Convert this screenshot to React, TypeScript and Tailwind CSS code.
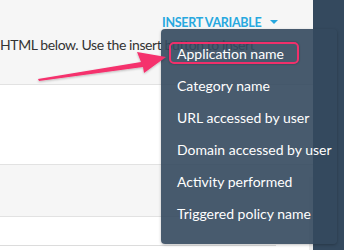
const items = [
  "Application name",
  "Category name",
  "URL accessed by user",
  "Domain accessed by user",
  "Activity performed",
  "Triggered policy name",
];

function Arrow() {
  return (
    <svg
      className="pointer-events-none absolute left-0 top-0"
      width="344"
      height="250"
      viewBox="0 0 344 250"
    >
      <defs>
        <filter id="sh" x="-10%" y="-30%" width="120%" height="160%">
          <feDropShadow dx="0" dy="1" stdDeviation="1" floodColor="#000" floodOpacity="0.25" />
        </filter>
      </defs>
      <polygon
        points="38,79 141,62 137,52 166,57 144,73 143,67 39,81"
        fill="#f5306d"
        filter="url(#sh)"
      />
    </svg>
  );
}

export default function App() {
  return (
    <div
      className="relative flex h-[250px] w-[344px] overflow-hidden bg-white text-[#333]"
      style={{ fontFamily: "Lato, 'Open Sans', Arial, sans-serif" }}
    >
      <div className="relative flex w-[313px] flex-col">
        <div className="h-[85px] border-b border-[#e2e2e2] bg-[#f6f6f6]">
          <div className="flex h-[36px] items-start pl-[162px] pt-[16px]">
            <span className="text-[12.5px] font-bold uppercase leading-[13px] tracking-[-0.3px] text-[#27a8df]">
              Insert Variable
            </span>
            <svg className="ml-[9px] mt-[4px]" width="8" height="4" viewBox="0 0 8 4">
              <polygon points="0,0 8,0 4,4" fill="#27a8df" />
            </svg>
          </div>
          <div className="whitespace-nowrap text-[14px] leading-[18px] tracking-[-0.4px]">
            HTML below. Use the insert button to insert
          </div>
        </div>
        <div className="h-[80px] border-b border-[#e2e2e2] bg-white" />
        <div className="h-[52px] border-b border-[#e2e2e2] bg-[#f6f6f6]" />
        <div className="h-[29px] w-[276px] border-b border-[#dcdcdc] bg-white" />
        <div className="absolute right-0 top-[177px] h-[73px] w-[4px] bg-[#ececec]" />
      </div>
      <div className="w-[31px] bg-[#34495e]" />

      <div className="absolute left-[161px] top-[29px] w-[176px] rounded-[4px] bg-[#34495e]/90 pb-[15px] pt-[8px] shadow-[0_1px_3px_rgba(0,0,0,0.25)]">
        {items.map((t) => (
          <div
            key={t}
            className="flex h-[32px] items-center whitespace-nowrap pl-[16px] text-[14px] text-white"
          >
            {t}
          </div>
        ))}
      </div>

      <div className="absolute left-[169px] top-[42px] h-[22px] w-[130px] rounded-[5px] border-[2.5px] border-[#f0306b] shadow-[0_0_2px_rgba(0,0,0,0.4)]" />

      <Arrow />
    </div>
  );
}
